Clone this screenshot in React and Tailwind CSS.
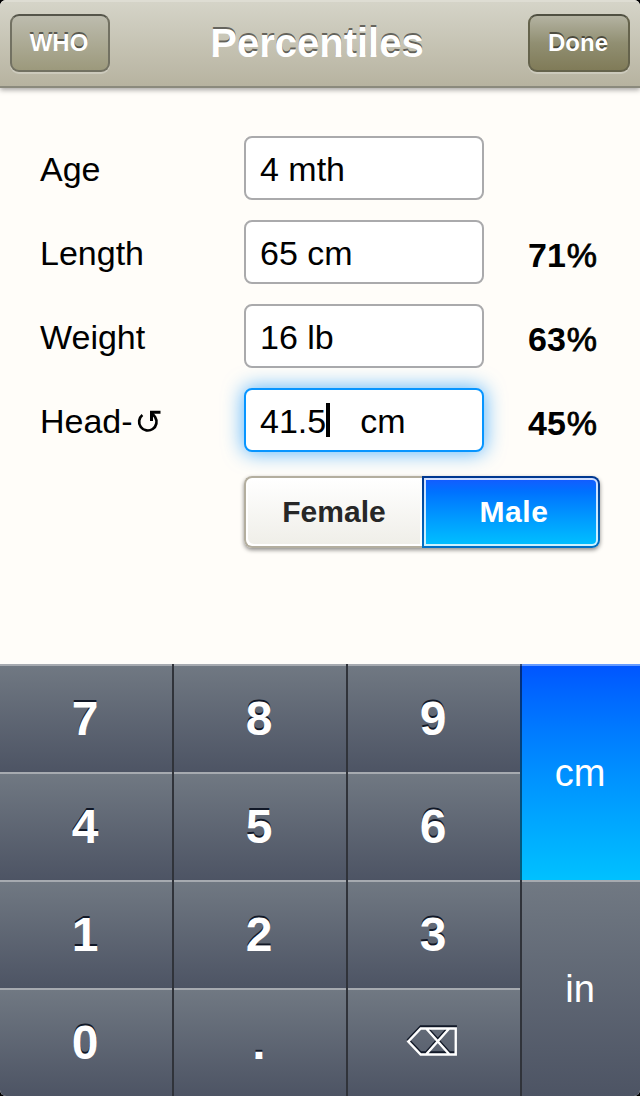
const rows = [
  { label: 'Age', value: '4 mth' },
  { label: 'Length', value: '65 cm', pct: '71' },
  { label: 'Weight', value: '16 lb', pct: '63' },
  { label: 'Head-', value: '41.5', unit: 'cm', pct: '45', active: true },
];

const keys = ['7', '8', '9', '4', '5', '6', '1', '2', '3', '0', '.', 'del'];

function Rotate() {
  return (
    <svg className="ml-px h-8 w-[27px]" viewBox="0 0 27 32" fill="none" stroke="#000">
      <path d="M8.4 10A8.7 8.7 0 1 0 21.2 12.2L18 8" strokeWidth="2.7" />
      <path d="M26.5 7.200H17.500V16" strokeWidth="3" />
    </svg>
  );
}

function DeletePaths() {
  return <path d="M2.300 17.500L14.700 4.500H49.700V30.500H14.700ZM20.200 4.500L43.500 30.500M43.200 4.500L20 30.500" />;
}

function DeleteIcon() {
  return (
    <svg className="mr-[2px] mb-[3px] h-[34px] w-[52px]" viewBox="0 0 52 34" fill="none" strokeWidth="2.500">
      <g stroke="#111827" transform="translate(0 -2)"><DeletePaths /></g>
      <g stroke="#fff"><DeletePaths /></g>
    </svg>
  );
}

function NavButton({ children, className }) {
  return (
    <button className={`h-[58px] rounded-[9px] border-2 pr-[2px] text-2xl font-bold text-white [text-shadow:0_-2px_0_rgba(0,0,0,0.5)] ${className}`}>
      {children}
    </button>
  );
}

function Row({ label, value, unit, pct, active }) {
  return (
    <div className="flex h-16 items-center text-[34px] leading-10 text-black">
      <div className="flex w-[204px] items-center pt-px">
        {label}
        {active && <Rotate />}
      </div>
      <div
        className={`flex h-16 w-60 items-center rounded-lg border-2 bg-white pt-px pl-[14px] ${
          active ? 'border-[#0795ff] shadow-[0_0_20px_1px_rgba(0,145,255,0.65)]' : 'border-[#aaaaac]'
        }`}
      >
        {value}
        {active && <span className="mt-[-1px] h-[34px] w-1 bg-black" />}
        {unit && <span className="ml-[30px]">{unit}</span>}
      </div>
      {pct && (
        <div className="ml-11 pt-[5px] font-bold">
          {pct}
          <span className="ml-px font-normal [-webkit-text-stroke:0.8px_#000]">%</span>
        </div>
      )}
    </div>
  );
}

export default function App() {
  return (
    <div className="h-[1096px] w-[640px] overflow-hidden bg-black font-['Liberation_Sans',Arial,sans-serif]">
      <div className="flex h-full flex-col overflow-hidden rounded-[6px] bg-[#fffdf9]">
        <header className="flex h-22 shrink-0 items-center justify-between border-t-2 border-b-2 border-t-[#deddd3] border-b-[#8b8a7d] bg-linear-to-b from-[#d5d4c8] to-[#b7b3a0] px-[10px] pb-[2px] shadow-[0_2px_5px_rgba(0,0,0,0.35)]">
          <NavButton className="w-[100px] border-[#727162] border-t-[#55554a] bg-linear-to-b from-[#bdbcae] to-[#9c997c] shadow-[0_2px_0_rgba(255,255,255,0.25)]">WHO</NavButton>
          <h1 className="pr-[4px] text-[40px] font-bold text-white [text-shadow:0_-2px_0_rgba(0,0,0,0.5)]">Percentiles</h1>
          <NavButton className="w-[102px] border-[#65634c] border-t-[#505042] bg-linear-to-b from-[#b4b3a2] via-[#918f72] to-[#807b58] shadow-[0_2px_0_rgba(255,255,255,0.25)]">Done</NavButton>
        </header>
        <main className="flex h-[576px] shrink-0 flex-col gap-5 pt-12 pl-10">
          {rows.map((r) => (
            <Row key={r.label} {...r} />
          ))}
          <div className="mt-1 ml-[204px] flex h-[72px] w-[356px] shrink-0 rounded-lg text-[30px] font-bold shadow-[0_2px_4px_rgba(0,0,0,0.45)]">
            <button className="w-[178px] rounded-l-lg border-2 border-r-0 border-[#b3ae9f] bg-linear-to-b from-white to-[#efeee8] pb-[2px] text-[#272727] shadow-[inset_2px_-2px_0_#fff,inset_-2px_2px_0_#fff]">Female</button>
            <button className="w-[178px] rounded-r-lg bg-linear-to-b from-[#00378f] to-[#0071c7] p-[2px] text-white">
              <span className="flex h-full items-center justify-center rounded-r-md bg-linear-to-b from-[#1459ff] to-[#00c1ff] pl-[6px] pb-[2px] shadow-[inset_0_0_0_2px_rgba(255,255,255,0.8)]">
                <span className="tracking-[0.6px]">Male</span>
              </span>
            </button>
          </div>
        </main>
        <div className="flex h-[432px] shrink-0 text-white">
          <div className="grid w-[520px] grid-cols-[174px_174px_172px] grid-rows-4">
            {keys.map((k, i) => (
              <button
                key={k}
                className={`flex items-center justify-center bg-linear-to-b from-[#717983] to-[#4d5464] pt-px text-5xl font-bold [text-shadow:0_-2px_0_#111827] ${
                  i % 3 === 2
                    ? 'pr-[2px] shadow-[inset_0_2px_0_#a6aab0]'
                    : 'pr-1 shadow-[inset_-2px_0_0_#30333a,inset_0_2px_0_#a6aab0]'
                }`}
              >
                {k === 'del' ? <DeleteIcon /> : k}
              </button>
            ))}
          </div>
          <div className="flex flex-1 flex-col text-[38px] [text-shadow:0_-2px_0_rgba(0,0,0,0.85)]">
            <button className="flex-1 bg-linear-to-b from-[#0054ff] to-[#00c1ff] pt-[3px] shadow-[inset_2px_0_0_rgba(0,0,0,0.5),inset_0_2px_0_#659bff]">cm</button>
            <button className="flex-1 bg-linear-to-b from-[#717983] to-[#4d5464] pt-[3px] shadow-[inset_2px_0_0_#30333a,inset_0_2px_0_#a6aab0]">in</button>
          </div>
        </div>
      </div>
    </div>
  );
}
